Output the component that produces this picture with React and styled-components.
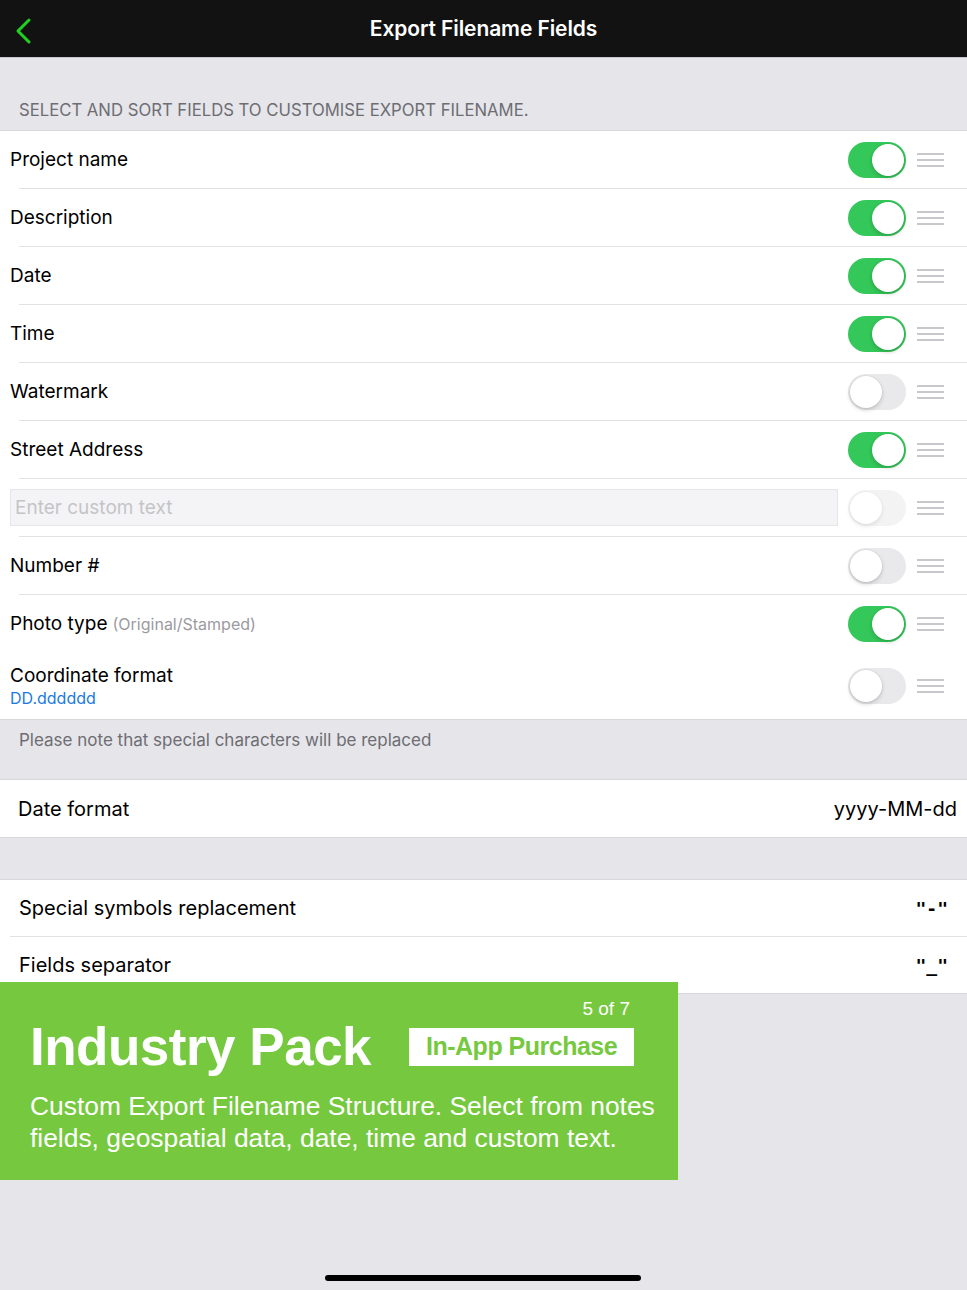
import React, { useState } from 'react';
import styled, { createGlobalStyle } from 'styled-components';

const GlobalStyle = createGlobalStyle`
  body {
    margin: 0;
    background: #e5e5ea;
    font-family: Inter, "Liberation Sans", sans-serif;
  }
`;

const Page = styled.div`
  position: relative;
  height: 1290px;
  overflow: hidden;
  background: #e5e5ea;
`;

const NavBar = styled.div`
  height: 57px;
  background: #121212;
  border-bottom: 1px solid #c8c8cc;
  display: flex;
  align-items: center;
  justify-content: center;
  position: relative;
`;

const BackButton = styled.button`
  position: absolute;
  left: 10px;
  top: 13px;
  background: none;
  border: none;
  padding: 4px;
  display: flex;
`;

const NavTitle = styled.h1`
  margin: 0;
  color: #fff;
  font-size: 21px;
  font-weight: 600;
  letter-spacing: -0.1px;
`;

const SectionHeader = styled.div`
  height: 72px;
  box-sizing: border-box;
  display: flex;
  align-items: flex-end;
  padding: 0 19px 10px;
  color: #6d6d72;
  font-size: 16.7px;
  text-transform: uppercase;
`;

const Group = styled.div`
  background: #fff;
  border-top: 1px solid #d8d8dc;
  border-bottom: 1px solid #d8d8dc;
`;

const Row = styled.div`
  position: relative;
  display: flex;
  align-items: center;
  height: ${(p) => p.$h || 57}px;
  padding: 0 ${(p) => p.$pr || 23}px 0 ${(p) => p.$pl || 10}px;
  & + & {
    border-top: 1px solid transparent;
  }
  & + &::before {
    content: '';
    position: absolute;
    top: -1px;
    left: ${(p) => p.$inset ?? 19}px;
    right: 0;
    height: 1px;
    background: #e2e2e6;
  }
`;

const Label = styled.div`
  flex: 1;
  color: #000;
  font-size: 19px;
  display: flex;
  flex-direction: column;
`;

const Hint = styled.span`
  color: #9b9b9f;
  font-size: 16px;
  margin-left: 5px;
`;

const SubValue = styled.span`
  color: #1a7ae0;
  font-size: 16px;
  margin-top: 1px;
`;

const CustomInput = styled.input`
  flex: 1;
  height: 37px;
  box-sizing: border-box;
  margin-right: 10px;
  background: #f4f4f6;
  border: 1px solid #e6e6ea;
  padding: 0 4px;
  font-family: inherit;
  font-size: 19px;
  color: #000;
  &::placeholder {
    color: #c4c4c8;
  }
`;

const Switch = styled.button`
  width: 58px;
  height: 36px;
  border-radius: 18px;
  border: none;
  padding: 0;
  position: relative;
  background: ${(p) => (p.$on ? '#34c759' : '#e9e9eb')};
  opacity: ${(p) => (p.$disabled ? 0.5 : 1)};
  flex-shrink: 0;
  &::after {
    content: '';
    position: absolute;
    top: 2px;
    left: ${(p) => (p.$on ? 24 : 2)}px;
    width: 32px;
    height: 32px;
    border-radius: 50%;
    background: #fff;
    box-shadow: 0 2px 4px rgba(0, 0, 0, 0.18), 0 0 0 0.5px rgba(0, 0, 0, 0.06);
  }
`;

const Handle = styled.div`
  width: 27px;
  margin-left: 11px;
  display: flex;
  flex-direction: column;
  gap: 4px;
  span {
    display: block;
    height: 2px;
    background: #c7c7cc;
  }
`;

const Note = styled.div`
  height: 59px;
  box-sizing: border-box;
  padding: 10px 19px 0;
  color: #6d6d72;
  font-size: 17px;
`;

const Gap = styled.div`
  height: 41px;
`;

const SettingLabel = styled.div`
  flex: 1;
  font-size: 20px;
  color: #000;
`;

const SettingValue = styled.div`
  font-size: ${(p) => (p.$mono ? 18 : 20)}px;
  color: #000;
  font-family: ${(p) => (p.$mono ? '"DejaVu Sans Mono", monospace' : 'inherit')};
  font-weight: ${(p) => (p.$mono ? 700 : 400)};
`;

const Banner = styled.div`
  position: absolute;
  left: 0;
  top: 982px;
  width: 678px;
  height: 198px;
  box-sizing: border-box;
  background: #76c83f;
  color: #fff;
  font-family: "Liberation Sans", Arial, sans-serif;
  padding: 16px 30px 0;
  display: flex;
  flex-direction: column;
  white-space: nowrap;
`;

const BannerCount = styled.div`
  align-self: flex-end;
  margin-right: 18px;
  font-size: 19px;
`;

const BannerHead = styled.div`
  display: flex;
  align-items: center;
  gap: 38px;
  margin-top: -4px;
`;

const BannerTitle = styled.div`
  font-size: 53px;
  font-weight: 700;
  letter-spacing: -0.5px;
`;

const Badge = styled.div`
  background: #fff;
  color: #76c83f;
  font-size: 25px;
  font-weight: 700;
  height: 38px;
  width: 225px;
  display: flex;
  align-items: center;
  justify-content: center;
  letter-spacing: -0.5px;
`;

const BannerText = styled.div`
  font-size: 26.4px;
  line-height: 32px;
  margin-top: 13px;
`;

const HomeIndicator = styled.div`
  position: absolute;
  left: 325px;
  bottom: 9px;
  width: 316px;
  height: 6px;
  border-radius: 3px;
  background: #000;
`;

const fields = [
  { label: 'Project name', on: true },
  { label: 'Description', on: true },
  { label: 'Date', on: true },
  { label: 'Time', on: true },
  { label: 'Watermark', on: false },
  { label: 'Street Address', on: true },
  { custom: true, on: false },
  { label: 'Number #', on: false },
  { label: 'Photo type', hint: '(Original/Stamped)', on: true },
  { label: 'Coordinate format', sub: 'DD.dddddd', on: false, h: 66 },
];

const DragHandle = () => (
  <Handle>
    <span />
    <span />
    <span />
  </Handle>
);

export default function App() {
  const [state, setState] = useState(fields.map((f) => f.on));
  const toggle = (i) => setState((s) => s.map((v, j) => (j === i ? !v : v)));

  return (
    <Page>
      <GlobalStyle />
      <NavBar>
        <BackButton>
          <svg width="20" height="28" viewBox="0 0 20 28">
            <path d="M15 3 L4 14 L15 25" fill="none" stroke="#1fd21f" strokeWidth="3" strokeLinecap="round" strokeLinejoin="round" />
          </svg>
        </BackButton>
        <NavTitle>Export Filename Fields</NavTitle>
      </NavBar>

      <SectionHeader>Select and sort fields to customise export filename.</SectionHeader>

      <Group>
        {fields.map((f, i) => (
          <Row key={i} $h={f.h}>
            {f.custom ? (
              <CustomInput placeholder="Enter custom text" />
            ) : (
              <Label>
                <span>
                  {f.label}
                  {f.hint && <Hint>{f.hint}</Hint>}
                </span>
                {f.sub && <SubValue>{f.sub}</SubValue>}
              </Label>
            )}
            <Switch $on={state[i]} $disabled={f.custom} onClick={() => !f.custom && toggle(i)} />
            <DragHandle />
          </Row>
        ))}
      </Group>

      <Note>Please note that special characters will be replaced</Note>

      <Group>
        <Row $pl={18} $pr={10}>
          <SettingLabel>Date format</SettingLabel>
          <SettingValue>yyyy-MM-dd</SettingValue>
        </Row>
      </Group>

      <Gap />

      <Group>
        <Row $h={56} $pl={19} $pr={19} $inset={10}>
          <SettingLabel>Special symbols replacement</SettingLabel>
          <SettingValue $mono>"-"</SettingValue>
        </Row>
        <Row $h={56} $pl={19} $pr={19} $inset={10}>
          <SettingLabel>Fields separator</SettingLabel>
          <SettingValue $mono>"_"</SettingValue>
        </Row>
      </Group>

      <Banner>
        <BannerCount>5 of 7</BannerCount>
        <BannerHead>
          <BannerTitle>Industry Pack</BannerTitle>
          <Badge>In-App Purchase</Badge>
        </BannerHead>
        <BannerText>
          Custom Export Filename Structure. Select from notes
          <br />
          fields, geospatial data, date, time and custom text.
        </BannerText>
      </Banner>

      <HomeIndicator />
    </Page>
  );
}
